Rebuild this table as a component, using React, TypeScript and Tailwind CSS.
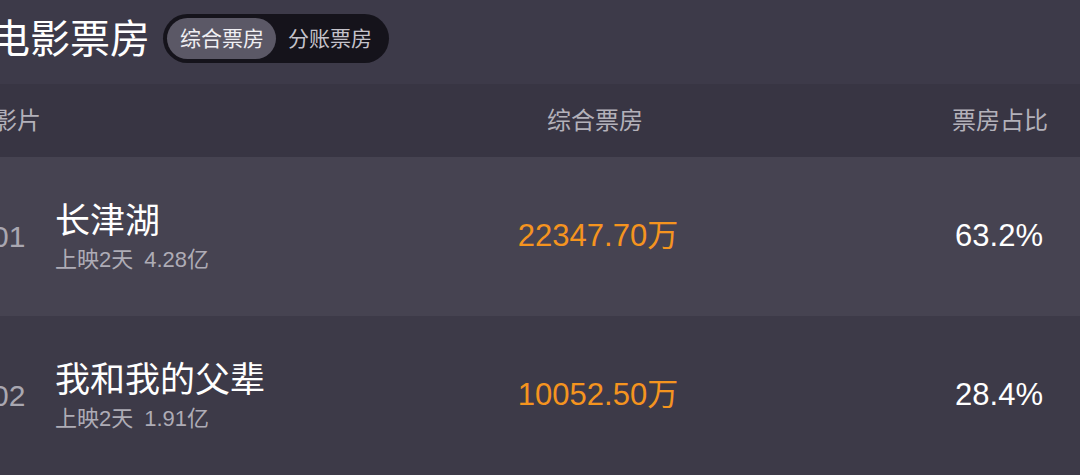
import React from "react";

const font = { fontFamily: '"Liberation Sans", "Noto Sans CJK SC", Arial, sans-serif' };

type Row = { rank: string; name: string; days: string; total: string; box: string; pct: string; bg: string };

const rows: Row[] = [
  { rank: "01", name: "长津湖", days: "上映2天", total: "4.28亿", box: "22347.70万", pct: "63.2%", bg: "bg-[#464351]" },
  { rank: "02", name: "我和我的父辈", days: "上映2天", total: "1.91亿", box: "10052.50万", pct: "28.4%", bg: "bg-[#3d3a48]" },
];

export default function App() {
  return (
    <div className="w-[1080px] h-[475px] overflow-hidden bg-[#3d3a49]" style={font}>
      <div className="w-[1088px] -ml-[8px]">
        {/* top bar */}
        <div className="h-[84px] flex items-center pb-[7px]">
          <div className="-ml-[2px] text-[40px] leading-[48px] text-white">电影票房</div>
          <div className="ml-[13px] flex items-center rounded-full bg-[#15131b] p-[4px]">
            <div className="h-[41px] pl-[13px] pr-[12px] flex items-center rounded-full bg-[#5b5866] text-[21px] text-[#f0eff3]">
              综合票房
            </div>
            <div className="h-[41px] pl-[12px] pr-[13px] flex items-center rounded-full text-[21px] text-[#c4c2ca]">
              分账票房
            </div>
          </div>
        </div>

        {/* header */}
        <div className="h-[73px] bg-[#383543] grid grid-cols-[458px_290px_1fr] items-center pr-[32px] text-[24px] text-[#b3b1ba]">
          <div className="pl-[1px]">影片</div>
          <div className="text-center">综合票房</div>
          <div className="text-right">票房占比</div>
        </div>

        {rows.map((r) => (
          <div
            key={r.rank}
            className={`h-[159px] ${r.bg} grid grid-cols-[458px_296px_1fr] items-center pr-[37px]`}
          >
            <div className="flex items-center">
              <div className="w-[63px] text-[30px] text-[#a9a7b1]">{r.rank}</div>
              <div className="flex flex-col">
                <div className="text-[35px] leading-[46px] text-white">{r.name}</div>
                <div className="text-[22px] leading-[32px] text-[#aeacb6]">
                  <span>{r.days}</span>
                  <span className="ml-[11px]">{r.total}</span>
                </div>
              </div>
            </div>
            <div className="text-center text-[31px] text-[#f5941f]">{r.box}</div>
            <div className="text-right text-[31px] text-white">{r.pct}</div>
          </div>
        ))}
      </div>
    </div>
  );
}
